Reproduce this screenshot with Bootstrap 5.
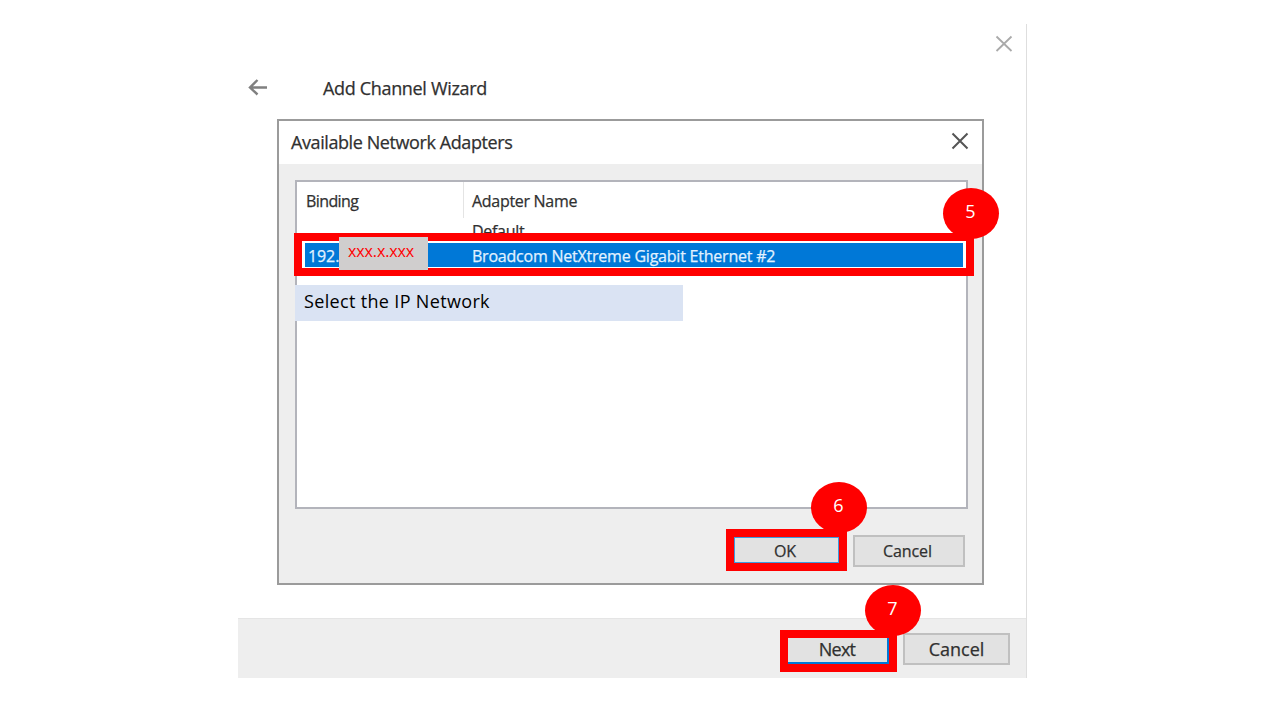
<!DOCTYPE html>
<html lang="en">
<head>
<meta charset="utf-8">
<meta name="viewport" content="width=device-width, initial-scale=1">
<title>Add Channel Wizard</title>
<link href="https://cdn.jsdelivr.net/npm/bootstrap@5.3.0/dist/css/bootstrap.min.css" rel="stylesheet">
<style>
body{width:1280px;height:720px;overflow:hidden;background:#fff;color:#303030;font-family:"Open Sans","Noto Sans",sans-serif;font-size:16px;line-height:24px}
.wizard{width:789px;height:654px;margin:24px 0 0 238px;border-right:1px solid #dedede;-webkit-text-stroke:.25px}
.titlebar{height:40px;padding:11px 13px 0 0}
.heading{height:55px;padding:12px 0 0 10px;font-size:18px;letter-spacing:-.33px}
.heading svg{margin:2px 55px 0 0}
.dialog{width:707px;height:466px;margin-left:39px;background:#eee;border:2px solid #9b9b9b}
.dialog-title{height:43px;padding:9px 13px 0 12px;background:#fff;font-size:18px;letter-spacing:-.41px}
.dialog-title svg{margin-top:2px}
.adapters{width:673px;height:329px;margin:16px 0 0 16px;background:#fff;border:2px solid #b3b4bb}
.cols{height:51px}
.col-bind{width:167px;height:36px;padding:7px 0 0 9px;border-right:1px solid #e4e4e4;letter-spacing:-.6px}
.col-name{padding:7px 0 0 8px;letter-spacing:-.3px}
.first-row{margin-top:6px}
.marked{border:8px solid red}
.picked{width:680px;height:43px;margin-left:-3px;padding:2px 3px 1px;background:#fff}
.picked-row{height:24px;background:#0078d7;color:#e2f2ff;line-height:26px}
.ip{width:167px;padding-left:3px;letter-spacing:-.1px}
.nic{letter-spacing:-.22px}
.mask{left:37px;top:-4px;width:89px;height:33px;background:#d0cece;color:red;padding:2px 0 0 9px;letter-spacing:-.1px;-webkit-text-stroke:0}
.hint{width:388px;height:36px;margin:9px 0 0 -2px;padding:4px 9px;background:#dae3f3;color:#000;font-size:18px;letter-spacing:.34px;-webkit-text-stroke:0}
.push{width:112px;height:32px;background:#e2e2e2;border:2px solid #c0c0c0;text-align:center;line-height:29px}
.ok{width:121px;height:42px;margin-right:6px;background:#e2e2e2;text-align:center}
.ok-face{height:26px;padding-right:3px;border:1px solid #3f9ade;line-height:27px}
.dlg-actions{height:75px;padding:20px 17px 0 0}
.dlg-actions .push{margin-top:6px;padding-right:3px;letter-spacing:-.1px}
.foot{height:60px;margin-top:33px;padding:11px 16px 0 0;background:#eee;border-top:1px solid #e5e5e5;font-size:18px}
.foot .push{width:107px;margin-top:3px}
.next{width:117px;height:42px;margin-right:6px;background:#e2e2e2;text-align:center;letter-spacing:-.7px}
.next-face{height:26px;padding-right:1px;border:solid #0078d7;border-width:0 2px 2px 0;line-height:22px}
.step{width:56px;height:51px;padding-right:1px;border-radius:50%;background:red;color:#fff;text-align:center;font-size:18px;line-height:47px;-webkit-text-stroke:0}
.step-5{left:705px;top:164px}
.step-6{left:573px;top:458px}
.step-7{left:627px;top:561px}
</style>
</head>
<body>
<main class="wizard d-flex flex-column position-relative text-nowrap">
  <div class="titlebar d-flex justify-content-end">
    <svg width="18" height="18" viewBox="0 0 18 18" fill="none" stroke="#aaa" stroke-width="1.8"><path d="M1.500 1.500 16.500 16M16.500 1.500 1.500 16"/></svg>
  </div>
  <div class="heading d-flex align-items-start">
    <svg width="20" height="18" viewBox="0 0 20 18" fill="none" stroke="#808080" stroke-width="2.4"><path d="M19 9.500H2M9.500 2 2 9.500l7.500 7"/></svg>
    <span>Add Channel Wizard</span>
  </div>
  <section class="dialog">
    <div class="dialog-title d-flex justify-content-between align-items-start">
      <span>Available Network Adapters</span>
      <svg width="18" height="18" viewBox="0 0 18 18" fill="none" stroke="#555" stroke-width="2"><path d="M1.500 1.500 16.500 16.500M16.500 1.500 1.500 16.500"/></svg>
    </div>
    <div class="adapters">
      <div class="cols d-flex">
        <div class="col-bind">Binding</div>
        <div class="col-name"><div>Adapter Name</div><div class="first-row">Default</div></div>
      </div>
      <div class="picked marked position-relative">
        <div class="picked-row d-flex"><span class="ip">192.</span><span class="nic">Broadcom NetXtreme Gigabit Ethernet #2</span></div>
        <span class="mask position-absolute">xxx.x.xxx</span>
      </div>
      <div class="hint">Select the IP Network</div>
    </div>
    <div class="dlg-actions d-flex justify-content-end">
      <div class="ok marked"><div class="ok-face">OK</div></div>
      <div class="push">Cancel</div>
    </div>
  </section>
  <footer class="foot d-flex justify-content-end">
    <div class="next marked"><div class="next-face">Next</div></div>
    <div class="push">Cancel</div>
  </footer>
  <span class="step step-5 position-absolute">5</span>
  <span class="step step-6 position-absolute">6</span>
  <span class="step step-7 position-absolute">7</span>
</main>
<script src="https://cdn.jsdelivr.net/npm/bootstrap@5.3.0/dist/js/bootstrap.bundle.min.js"></script>
</body>
</html>
